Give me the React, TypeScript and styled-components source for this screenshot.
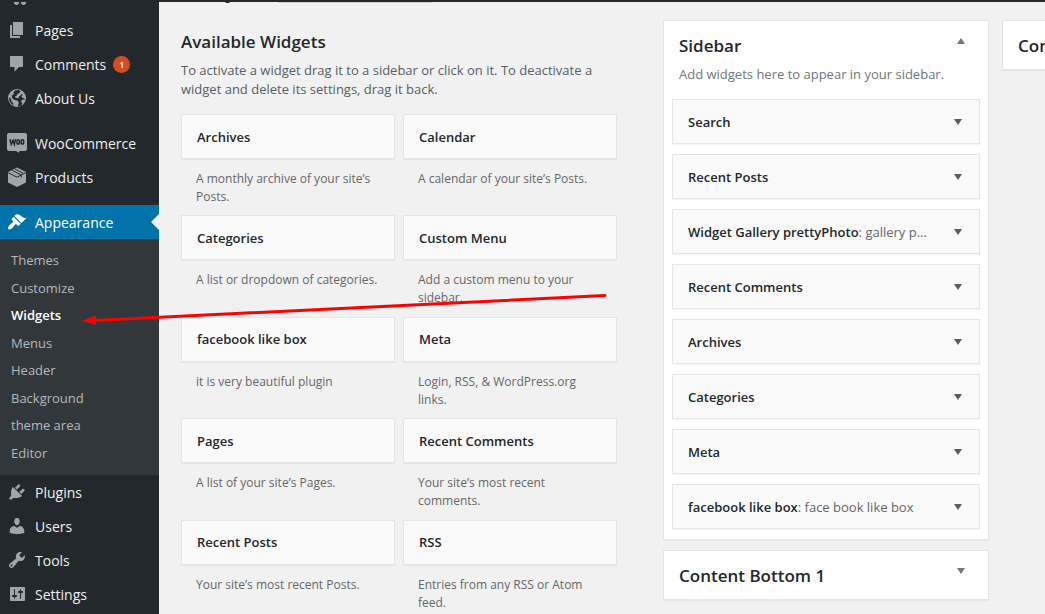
import React from "react";
import styled, { createGlobalStyle } from "styled-components";

const GlobalStyle = createGlobalStyle`
  *, *::before, *::after { box-sizing: border-box; }
  body {
    margin: 0;
    background: #f1f1f1;
    color: #555d66;
    font: 13px/19px "Open Sans", sans-serif;
  }
  h2, h3, p, ul { margin: 0; padding: 0; }
  ul { list-style: none; }
  a { color: inherit; text-decoration: none; }
`;

const Page = styled.div`
  display: flex;
  flex-direction: column;
  height: 100vh;
  overflow: hidden;
  position: relative;
`;

const AdminBar = styled.header`
  flex: 0 0 2px;
  background: #23282d;
`;

const Body = styled.div`
  display: flex;
  flex: 1;
  min-height: 0;
`;

const Menu = styled.nav`
  flex: 0 0 159px;
  background: #23282d;
  color: #eee;
`;

const MenuTail = styled.div`
  height: 11px;
  padding-left: 7px;

  svg { display: block; }
`;

const MenuLink = styled.a<{ $current?: boolean }>`
  display: flex;
  align-items: center;
  gap: 8px;
  height: 34px;
  padding: 0 7px;
  position: relative;
  font-size: 14px;
  line-height: 20px;
  color: ${(p) => (p.$current ? "#fff" : "#eee")};
  background: ${(p) => (p.$current ? "#0073aa" : "transparent")};

  svg { flex: none; fill: ${(p) => (p.$current ? "#fff" : "#a0a5aa")}; }
  span { padding-top: 2px; }

  &::after {
    content: "";
    display: ${(p) => (p.$current ? "block" : "none")};
    position: absolute;
    right: 0;
    top: 9px;
    border: 8px solid transparent;
    border-left-width: 0;
    border-right-color: #f1f1f1;
  }
`;

const Badge = styled.b`
  display: grid;
  place-items: center;
  width: 17px;
  height: 17px;
  margin-left: -1px;
  border-radius: 9px;
  background: #d54e21;
  color: #fff;
  font-size: 9px;
  font-weight: 600;
  line-height: 17px;
`;

const Separator = styled.li`
  height: 11px;
`;

const Submenu = styled.ul`
  display: grid;
  grid-auto-rows: 1fr;
  height: 236px;
  padding: 8px 0;
  background: #32373c;
`;

const SubLink = styled.a<{ $current?: boolean }>`
  display: flex;
  align-items: center;
  height: 100%;
  padding: 0 11px;
  color: ${(p) => (p.$current ? "#fff" : "#b4b9be")};
  font-weight: ${(p) => (p.$current ? 600 : 400)};
`;

const Main = styled.main`
  flex: 1;
  min-width: 0;
  overflow: hidden;
`;

const TitleEdge = styled.svg`
  display: block;
  height: 2px;
  width: 300px;
`;

const Columns = styled.div`
  display: grid;
  grid-template-columns: minmax(469px, 1fr) 326px 326px;
  column-gap: 13px;
  align-items: start;
  padding: 16px 22px 0;
`;

const Available = styled.section`
  padding: 12px 33px 0 0;
`;

const Heading = styled.h2`
  color: #23282d;
  font-size: 17px;
  font-weight: 600;
  line-height: 20px;
  white-space: nowrap;
`;

const Intro = styled.p`
  padding: 9px 0 15px;
`;

const TileGrid = styled.div`
  display: grid;
  grid-template-columns: 1fr 1fr;
  grid-auto-rows: 1fr;
  column-gap: 8px;
  min-height: 507px;
`;

const Card = styled.div`
  display: flex;
  align-items: center;
  justify-content: space-between;
  height: 45px;
  padding: 0 15px;
  border: 1px solid #e5e5e5;
  background: #fafafa;
  box-shadow: 0 1px 1px rgba(0, 0, 0, 0.04);
`;

const CardTitle = styled.h3`
  color: #23282d;
  font-size: 13px;
  font-weight: 600;
  line-height: 18px;
  white-space: nowrap;

  span { color: #666; font-weight: 400; }
`;

const Description = styled.p`
  padding: 11px 15px 0;
  color: #666;
  font-size: 12px;
  line-height: 18px;
`;

const Areas = styled.div`
  display: flex;
  flex-direction: column;
  gap: 10px;
`;

const Area = styled.section`
  padding: 0 8px;
  border: 1px solid #e5e5e5;
  background: #fff;
  box-shadow: 0 1px 1px rgba(0, 0, 0, 0.04);
`;

const AreaHead = styled.div`
  display: flex;
  justify-content: space-between;
  height: 48px;
  padding: 15px 14px 0 7px;
`;

const AreaNote = styled.p`
  padding: 0 7px 15px;
  margin-top: -4px;
  color: #72777c;
`;

const Widgets = styled.div`
  display: grid;
  gap: 10px;
  padding-bottom: 10px;
`;

const Toggle = styled.button<{ $muted?: boolean }>`
  display: block;
  width: 10px;
  height: 10px;
  margin-right: ${(p) => (p.$muted ? "0" : "1px")};
  padding: 0;
  border: 0;
  background: none;
  cursor: pointer;

  svg { display: block; fill: ${(p) => (p.$muted ? "#72777c" : "#555d66")}; }
`;

const Arrow = styled.svg`
  position: absolute;
  left: 82px;
  top: 290px;
  pointer-events: none;
`;

const icons: Record<string, React.ReactNode> = {
  page: <path d="M6 15V2h10v13H6zM5 16h8v2H3V5h2v11z" />,
  comments: <path d="M4 2h11c.6 0 1 .4 1 1v9c0 .6-.4 1-1 1h-3l-4.500 4.800V13H4c-.6 0-1-.4-1-1V3c0-.6.4-1 1-1z" />,
  globe: (
    <>
      <circle cx="10" cy="10" r="9" />
      <path
        fill="#23282d"
        d="M8.500 2.200L11.800 2l1.700 1.400-1.300 1.800-1.800.5-.8 2.100-1.800.7 1 1.300 2.600.6.600-2 2-1.500 1.200-1 .9.500-1.600 1.900.8 1.500 2 .6.500 1.500-1.500-.4-1.800.5-.2 2 1 1.600-.9 2-2.200.9-1.700-.5 1.300-2.200-.4-2.300-2-1.300-2.400-.5-2-1.800-.2-2.300L7 6.100l-.5-1.800z"
      />
      <path fill="#23282d" d="M2 9l2.200 2.200.3 2.300 1.600 1.800.5 2.100-2-1.500L2.400 13z" />
    </>
  ),
  woo: (
    <>
      <path d="M2 0h16c1.100 0 2 .9 2 2v14c0 1.100-.9 2-2 2h-5.500l-.6 1.800L9 18H2c-1.100 0-2-.9-2-2V2C0 .9.9 0 2 0z" />
      <g fill="none" stroke="#23282d" strokeWidth="1.500">
        <path d="M3 6.200l1.200 5.200L6 7.500l1.400 3.900 1.100-5.200" />
        <ellipse cx="11.200" cy="8.900" rx="1.300" ry="2.100" />
        <ellipse cx="15.400" cy="8.900" rx="1.300" ry="2.100" />
      </g>
    </>
  ),
  box: (
    <>
      <path d="M10 .5L19 5v10.500L10 20l-9-4.500V5z" />
      <path d="M1.200 5.600L10 10.200l8.800-4.600M5.200 3.300l9 4.700v2.500M8 2l8 4.200" fill="none" stroke="#23282d" strokeWidth="1" />
    </>
  ),
  appearance: (
    <path d="M14.480 11.060L7.410 3.990l1.500-1.500c.5-.56 2.300-.47 3.510.32 1.210.8 1.430 1.280 2.910 2.100 1.180.64 2.450 1.260 4.450.85zm-.71.71L6.700 4.700 4.930 6.470c-.39.39-.39 1.020 0 1.410l1.060 1.060c.39.39.39 1.030 0 1.420-.6.6-1.430 1.110-2.210 1.690-.35.26-.7.53-1.010.84C1.430 14.230.4 16.080 1.400 17.070c.99 1 2.840-.03 4.180-1.360.31-.31.58-.66.85-1.020.57-.78 1.080-1.610 1.690-2.210.39-.39 1.020-.39 1.410 0l1.060 1.060c.39.39 1.020.39 1.410 0z" />
  ),
  plugins: (
    <path d="M13.110 4.360L9.870 7.600 8 5.730l3.240-3.240c.35-.34 1.050-.2 1.560.32.52.51.66 1.210.31 1.550zm-8 1.770l.91-1.120 9.010 9.010-1.190.84c-.71.71-2.630 1.160-3.820 1.160H6.140L4.900 17.260c-.59.59-1.540.59-2.120 0-.59-.58-.59-1.530 0-2.120l1.240-1.240v-3.880c0-1.130.4-3.190 1.090-3.890zm7.260 3.970l3.240-3.240c.34-.35 1.040-.21 1.550.31.52.51.66 1.210.31 1.550l-3.240 3.250z" />
  ),
  users: (
    <path d="M10 9.250c-2.270 0-2.730-3.440-2.730-3.440C7 4.020 7.820 2 9.970 2c2.160 0 2.980 2.020 2.710 3.810 0 0-.41 3.440-2.680 3.440zm0 2.570L12.720 10c2.390 0 4.520 2.330 4.520 4.530v2.490s-3.650 1.130-7.240 1.130c-3.650 0-7.240-1.130-7.240-1.130v-2.490c0-2.250 1.940-4.480 4.470-4.480z" />
  ),
  tools: (
    <path d="M16.680 9.770c-1.340 1.340-3.300 1.670-4.950.99l-5.410 6.520c-.99.99-2.590.99-3.580 0s-.99-2.590 0-3.570l6.520-5.420c-.68-1.650-.35-3.610.99-4.950 1.280-1.280 3.120-1.620 4.720-1.060l-2.890 2.890 2.820 2.820 2.860-2.870c.53 1.580.18 3.390-1.080 4.650zM3.810 16.210c.4.39 1.040.39 1.430 0 .4-.4.4-1.040 0-1.430-.39-.4-1.030-.4-1.430 0-.39.39-.39 1.030 0 1.430z" />
  ),
  settings: (
    <path
      fillRule="evenodd"
      d="M18 16V4c0-.55-.45-1-1-1H4c-.55 0-1 .45-1 1v12c0 .55.45 1 1 1h13c.55 0 1-.45 1-1zM8 11h1c.55 0 1 .45 1 1s-.45 1-1 1H8v1.500c0 .28-.22.5-.5.5s-.5-.22-.5-.5V13H6c-.55 0-1-.45-1-1s.45-1 1-1h1V5.500c0-.28.22-.5.5-.5s.5.22.5.5V11zm5-2h-1c-.55 0-1-.45-1-1s.45-1 1-1h1V5.500c0-.28.22-.5.5-.5s.5.22.5.5V7h1c.55 0 1 .45 1 1s-.45 1-1 1h-1v5.500c0 .28-.22.5-.5.5s-.5-.22-.5-.5V9z"
    />
  ),
};

function MenuItem({ icon, label, count, current }: { icon: string; label: string; count?: number; current?: boolean }) {
  return (
    <MenuLink href="#" $current={current}>
      <svg width="20" height="20" viewBox="0 0 20 20" aria-hidden="true">{icons[icon]}</svg>
      <span>{label}</span>
      {count && <Badge>{count}</Badge>}
    </MenuLink>
  );
}

function ToggleButton({ label, up, muted }: { label: string; up?: boolean; muted?: boolean }) {
  return (
    <Toggle type="button" aria-label={label} $muted={muted}>
      <svg width="10" height="10" viewBox="0 0 10 10" aria-hidden="true">
        <path d={up ? "M1 8h8L5 2z" : "M1 2h8L5 8z"} />
      </svg>
    </Toggle>
  );
}

const submenu = ["Themes", "Customize", "Widgets", "Menus", "Header", "Background", "theme area", "Editor"];

const available = [
  ["Archives", "A monthly archive of your site’s Posts."],
  ["Calendar", "A calendar of your site’s Posts."],
  ["Categories", "A list or dropdown of categories."],
  ["Custom Menu", "Add a custom menu to your sidebar."],
  ["facebook like box", "it is very beautiful plugin"],
  ["Meta", "Login, RSS, & WordPress.org links."],
  ["Pages", "A list of your site’s Pages."],
  ["Recent Comments", "Your site’s most recent comments."],
  ["Recent Posts", "Your site’s most recent Posts."],
  ["RSS", "Entries from any RSS or Atom feed."],
];

const placed: { name: string; detail?: string }[] = [
  { name: "Search" },
  { name: "Recent Posts" },
  { name: "Widget Gallery prettyPhoto", detail: "gallery p..." },
  { name: "Recent Comments" },
  { name: "Archives" },
  { name: "Categories" },
  { name: "Meta" },
  { name: "facebook like box", detail: "face book like box" },
];

export default function App() {
  return (
    <>
      <GlobalStyle />
      <Page>
        <AdminBar />
        <Body>
          <Menu>
            <MenuTail>
              <svg width="20" height="4" viewBox="0 0 20 4" fill="#a0a5aa" aria-hidden="true">
                <ellipse cx="9.500" cy="0" rx="2.500" ry="3" />
                <ellipse cx="16.500" cy="0" rx="2.500" ry="3" />
              </svg>
            </MenuTail>
            <ul>
              <li><MenuItem icon="page" label="Pages" /></li>
              <li><MenuItem icon="comments" label="Comments" count={1} /></li>
              <li><MenuItem icon="globe" label="About Us" /></li>
              <Separator />
              <li><MenuItem icon="woo" label="WooCommerce" /></li>
              <li><MenuItem icon="box" label="Products" /></li>
              <Separator />
              <li>
                <MenuItem icon="appearance" label="Appearance" current />
                <Submenu>
                  {submenu.map((s) => (
                    <li key={s}><SubLink href="#" $current={s === "Widgets"}>{s}</SubLink></li>
                  ))}
                </Submenu>
              </li>
              <li><MenuItem icon="plugins" label="Plugins" /></li>
              <li><MenuItem icon="users" label="Users" /></li>
              <li><MenuItem icon="tools" label="Tools" /></li>
              <li><MenuItem icon="settings" label="Settings" /></li>
            </ul>
          </Menu>
          <Main>
            <TitleEdge viewBox="0 0 300 2" aria-hidden="true">
              <path d="M66 0h5l-1 1h-3z" fill="#23282d" />
              <path d="M119 0h154v1H119z" fill="#ccc" />
            </TitleEdge>
            <Columns>
              <Available>
                <Heading>Available Widgets</Heading>
                <Intro>
                  To activate a widget drag it to a sidebar or click on it. To deactivate a widget and delete its
                  settings, drag it back.
                </Intro>
                <TileGrid>
                  {available.map(([name, text]) => (
                    <div key={name}>
                      <Card><CardTitle>{name}</CardTitle></Card>
                      <Description>{text}</Description>
                    </div>
                  ))}
                </TileGrid>
              </Available>
              <Areas>
                <Area>
                  <AreaHead>
                    <Heading>Sidebar</Heading>
                    <ToggleButton label="Collapse Sidebar" up muted />
                  </AreaHead>
                  <AreaNote>Add widgets here to appear in your sidebar.</AreaNote>
                  <Widgets>
                    {placed.map((w) => (
                      <Card key={w.name}>
                        <CardTitle>
                          {w.name}
                          {w.detail && <span>: {w.detail}</span>}
                        </CardTitle>
                        <ToggleButton label={`Edit ${w.name}`} />
                      </Card>
                    ))}
                  </Widgets>
                </Area>
                <Area>
                  <AreaHead>
                    <Heading>Content Bottom 1</Heading>
                    <ToggleButton label="Expand Content Bottom 1" muted />
                  </AreaHead>
                </Area>
              </Areas>
              <Areas>
                <Area>
                  <AreaHead>
                    <Heading>Content Bottom 2</Heading>
                  </AreaHead>
                </Area>
              </Areas>
            </Columns>
          </Main>
        </Body>
        <Arrow width="526" height="36" viewBox="0 0 526 36" aria-hidden="true">
          <path d="M12 30.500L523 5.500" stroke="#f00" strokeWidth="3" strokeLinecap="round" />
          <path d="M0 30.800L14 25.500V35z" fill="#f00" />
        </Arrow>
      </Page>
    </>
  );
}
